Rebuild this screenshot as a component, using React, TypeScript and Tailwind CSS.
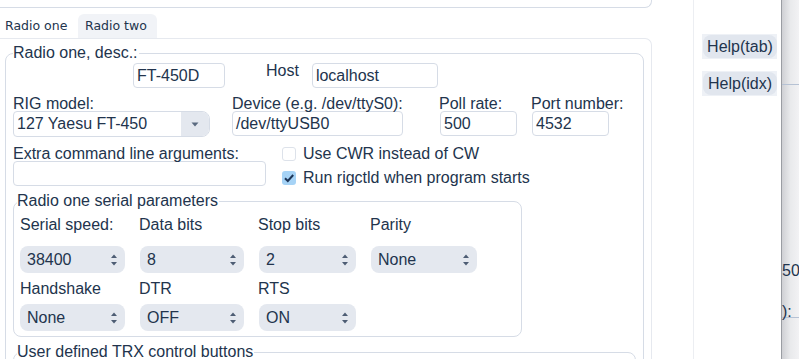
import React from "react";

const line = "border-[#d6dce6]";

function TextBox({ value, className = "" }: { value?: string; className?: string }) {
	return (
		<div
			className={`h-[25px] border ${line} rounded-[4px] bg-white pl-[3px] flex items-center leading-[18px] whitespace-nowrap overflow-hidden ${className}`}
		>
			{value}
		</div>
	);
}

function Spinner({ value, className = "" }: { value: string; className?: string }) {
	return (
		<div
			className={`h-[27px] rounded-[8px] bg-[#e4e8ef] flex items-center justify-between pl-[7px] pr-[8px] leading-[18px] ${className}`}
		>
			<span>{value}</span>
			<svg width="6" height="12" viewBox="0 0 6 12">
				<path d="M3 0.5 L6 4 H0 Z" fill="#4d5d74" />
				<path d="M3 11.5 L6 8 H0 Z" fill="#4d5d74" />
			</svg>
		</div>
	);
}

function Check({ on, label }: { on?: boolean; label: string }) {
	return (
		<div className="flex items-center h-[18px]">
			<div
				className={`w-[14px] h-[14px] rounded-[3px] flex items-center justify-center ${
					on ? "bg-[#a6d3f6]" : "border border-[#dde2ea] bg-white"
				}`}
			>
				{on && (
					<svg width="12" height="12" viewBox="0 0 12 12">
						<path d="M2 6.2 L4.8 9 L10.2 3" fill="none" stroke="#1d3557" strokeWidth="2" />
					</svg>
				)}
			</div>
			<span className="ml-[7px] leading-[18px]">{label}</span>
		</div>
	);
}

const App: React.FC = () => {
	return (
		<div className="w-[799px] h-[359px] overflow-hidden flex bg-white text-[16px] text-[#22344d] font-['Liberation_Sans',Arial,sans-serif]">
			{/* Main settings column */}
			<div className="w-[652px] shrink-0 flex flex-col">
				<div className={`h-[8px] shrink-0 border-b border-r ${line} rounded-br-[7px]`} />

				{/* Tabs */}
				<div className="mt-[6px] h-[24px] shrink-0 flex font-['DejaVu_Sans',sans-serif] text-[12.5px]">
					<div className="w-[78px] pl-[5px] flex items-center">Radio one</div>
					<div className="w-[79px] pl-[7px] flex items-center bg-[#f1f3f7] rounded-t-[6px]">Radio two</div>
				</div>

				<div className="shrink-0 border-t border-r border-[#e6e9ef] rounded-tr-[7px]">
					<fieldset className={`mt-[5px] ml-[5px] w-[639px] h-[340px] border ${line} rounded-[8px] pl-[7px] pt-[1px]`}>
						<legend className="leading-[18px] pr-[1px]">Radio one, desc.:</legend>

						{/* Description / host */}
						<div className="flex items-start">
							<TextBox value="FT-450D" className="ml-[120px] w-[92px]" />
							<span className="ml-[41px] leading-[18px] mt-[-1px]">Host</span>
							<TextBox value="localhost" className="ml-[13px] w-[126px]" />
						</div>

						{/* Rig / device / poll / port */}
						<div className="flex items-start mt-[8px]">
							<div className="w-[197px]">
								<div className="leading-[15px] h-[15px] whitespace-nowrap">RIG model:</div>
								<div className={`h-[26px] flex border ${line} rounded-l-[4px] rounded-r-[8px] overflow-hidden`}>
									<div className="flex-1 pl-[3px] flex items-center whitespace-nowrap">127 Yaesu FT-450</div>
									<div className="w-[28px] bg-[#e4e8ef] flex items-center justify-center">
										<svg width="8" height="5" viewBox="0 0 8 5">
											<path d="M0.5 0.5 H7.5 L4 4.5 Z" fill="#5a6a80" />
										</svg>
									</div>
								</div>
							</div>
							<div className="ml-[22px] w-[171px]">
								<div className="leading-[15px] h-[15px] whitespace-nowrap">Device (e.g. /dev/ttyS0):</div>
								<TextBox value="/dev/ttyUSB0" className="w-[171px]" />
							</div>
							<div className="ml-[36px] w-[78px]">
								<div className="leading-[15px] h-[15px] whitespace-nowrap">Poll rate:</div>
								<TextBox value="500" className="ml-[1px] w-[77px]" />
							</div>
							<div className="ml-[14px]">
								<div className="leading-[15px] h-[15px] whitespace-nowrap">Port number:</div>
								<TextBox value="4532" className="ml-[1px] w-[77px]" />
							</div>
						</div>

						{/* Extra args and options */}
						<div className="flex items-start">
							<div className="w-[253px] mt-[10px]">
								<div className="leading-[14px] h-[14px] whitespace-nowrap">Extra command line arguments:</div>
								<TextBox className="w-[253px]" />
							</div>
							<div className="ml-[16px] mt-[8px] flex flex-col gap-[6px]">
								<Check label="Use CWR instead of CW" />
								<Check on label="Run rigctld when program starts" />
							</div>
						</div>

						{/* Serial parameters */}
						<fieldset className={`mt-[5px] w-[509px] border ${line} rounded-[8px] pl-[3px] pb-[5px]`}>
							<legend className="leading-[18px] pr-[1px]">Radio one serial parameters</legend>
							<div className="pl-[3px] pt-[6px]">
								<div className="flex leading-[18px]">
									<span className="w-[119px]">Serial speed:</span>
									<span className="w-[119px]">Data bits</span>
									<span className="w-[112px]">Stop bits</span>
									<span>Parity</span>
								</div>
								<div className="flex mt-[12px]">
									<div className="w-[120px]"><Spinner value="38400" className="w-[105px]" /></div>
									<div className="w-[119px]"><Spinner value="8" className="w-[104px]" /></div>
									<div className="w-[112px]"><Spinner value="2" className="w-[97px]" /></div>
									<Spinner value="None" className="w-[106px]" />
								</div>
								<div className="flex leading-[18px] mt-[7px]">
									<span className="w-[119px]">Handshake</span>
									<span className="w-[119px]">DTR</span>
									<span className="w-[112px]">RTS</span>
								</div>
								<div className="flex mt-[6px]">
									<div className="w-[120px]"><Spinner value="None" className="w-[105px]" /></div>
									<div className="w-[119px]"><Spinner value="OFF" className="w-[104px]" /></div>
									<div className="w-[112px]"><Spinner value="ON" className="w-[97px]" /></div>
								</div>
							</div>
						</fieldset>

						{/* User buttons */}
						<fieldset className={`mt-[6px] w-[623px] h-[60px] border ${line} rounded-[8px] pl-[3px]`}>
							<legend className="leading-[18px] pr-[1px]">User defined TRX control buttons</legend>
						</fieldset>
					</fieldset>
				</div>
			</div>

			<div className="w-[41px] shrink-0" />

			{/* Help column */}
			<div className="w-[88px] shrink-0 border-l border-[#eceef2] pl-[8px] pt-[34px] flex flex-col gap-[12px]">
				{["Help(tab)", "Help(idx)"].map((t) => (
					<div key={t} className="w-[75px] h-[25px] shrink-0 bg-[#eef1f6] flex">
						<button
							type="button"
							className="flex-1 ml-[1px] my-[1px] rounded-[8px] bg-[#e1e6ee] flex items-center justify-center leading-[18px] text-[#22344d]"
						>
							{t}
						</button>
					</div>
				))}
			</div>

			{/* Window edge behind */}
			<div className="w-[18px] shrink-0 border-l border-[#9a9da3] bg-gradient-to-r from-[#cfd0d4] via-[#e9eaec] to-[#f2f2f4] flex flex-col">
				<div className="h-[84px] shrink-0" />
				<div className="h-px shrink-0 bg-[#b6c2d4]" />
				<div className="mt-[177px] leading-[18px] whitespace-nowrap">50</div>
				<div className="mt-[26px] leading-[12px] h-[12px] border-b border-[#b6c2d4] whitespace-nowrap">):</div>
			</div>
		</div>
	);
};

export default App;
